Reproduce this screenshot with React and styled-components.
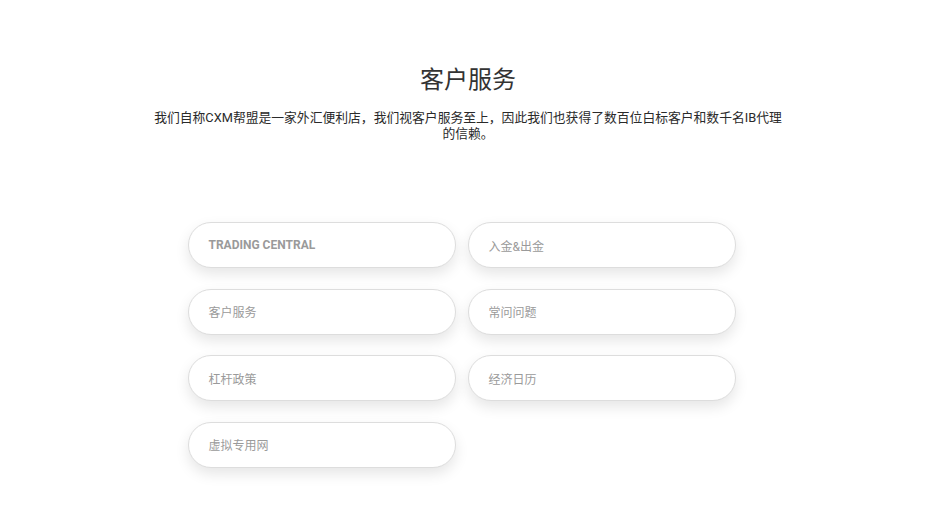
import React from "react";
import styled, { createGlobalStyle } from "styled-components";

const GlobalStyle = createGlobalStyle`
  html, body {
    margin: 0;
    padding: 0;
    background: #ffffff;
    font-family: Roboto, "Noto Sans CJK SC", sans-serif;
  }
`;

const Page = styled.div`
  width: 936px;
  min-height: 516px;
  display: flex;
  flex-direction: column;
  align-items: center;
  padding-top: 64px;
  box-sizing: border-box;
`;

const Title = styled.h1`
  margin: 0;
  font-size: 24px;
  font-weight: 400;
  line-height: 32px;
  color: #333333;
`;

const Intro = styled.p`
  margin: 14px 0 0;
  width: 632px;
  text-align: center;
  font-size: 12.8px;
  line-height: 16px;
  color: #2a2a2a;
`;

const Grid = styled.div`
  margin-top: 80px;
  display: grid;
  grid-template-columns: 268px 268px;
  column-gap: 12px;
  row-gap: 20.5px;
  margin-right: 13px;
`;

const LinkButton = styled.a`
  height: 46px;
  display: flex;
  align-items: center;
  padding: 0 20px;
  box-sizing: border-box;
  border: 1px solid #dddddd;
  border-radius: 23px;
  background: #ffffff;
  box-shadow: 0 6px 14px rgba(0, 0, 0, 0.1);
  color: #9a9a9a;
  font-size: 12px;
  font-weight: ${(p) => (p.$bold ? 700 : 400)};
  text-decoration: none;
  cursor: pointer;
`;

const items = [
  { label: "TRADING CENTRAL", bold: true },
  { label: "入金&出金" },
  { label: "客户服务" },
  { label: "常问问题" },
  { label: "杠杆政策" },
  { label: "经济日历" },
  { label: "虚拟专用网" },
];

export default function App() {
  return (
    <>
      <GlobalStyle />
      <Page>
        <Title>客户服务</Title>
        <Intro>
          我们自称CXM帮盟是一家外汇便利店，我们视客户服务至上，因此我们也获得了数百位白标客户和数千名IB代理的信赖。
        </Intro>
        <Grid>
          {items.map((item) => (
            <LinkButton key={item.label} $bold={item.bold}>
              {item.label}
            </LinkButton>
          ))}
        </Grid>
      </Page>
    </>
  );
}
